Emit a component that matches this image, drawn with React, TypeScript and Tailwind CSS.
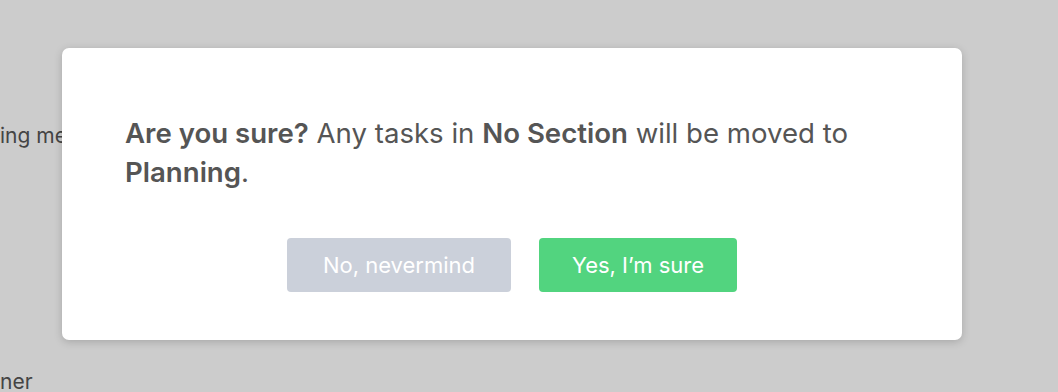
import React from 'react';

const ConfirmDialog: React.FC = () => {
  return (
    <div className="absolute left-[62px] top-[48px] w-[900px] h-[292px] bg-white rounded-[7px] shadow-[0_2px_8px_rgba(0,0,0,0.18)] px-[63px] pt-[66px]">
      <p className="text-[27.6px] leading-[39px] text-[#555555]">
        <span className="font-semibold">Are you sure?</span> Any tasks in{' '}
        <span className="font-semibold">No Section</span> will be moved to{' '}
        <span className="font-semibold">Planning</span>.
      </p>
      <div className="flex justify-center gap-[28px] mt-[46px]">
        <button className="w-[224px] h-[54px] rounded-[4px] bg-[#cbd0da] text-white text-[22px]">
          No, nevermind
        </button>
        <button className="w-[198px] h-[54px] rounded-[4px] bg-[#52d47f] text-white text-[22px]">
          Yes, I’m sure
        </button>
      </div>
    </div>
  );
};

export default function App() {
  return (
    <div
      className="relative w-[1058px] h-[392px] overflow-hidden bg-[#cccccc]"
      style={{ fontFamily: 'Inter, "Noto Sans", sans-serif' }}
    >
      {/* Page behind the overlay */}
      <div className="flex flex-col text-[21px] text-[#444444]">
        <div className="pt-[120px] h-[366px]">ing meetings</div>
        <div>ner</div>
      </div>
      <ConfirmDialog />
    </div>
  );
}
